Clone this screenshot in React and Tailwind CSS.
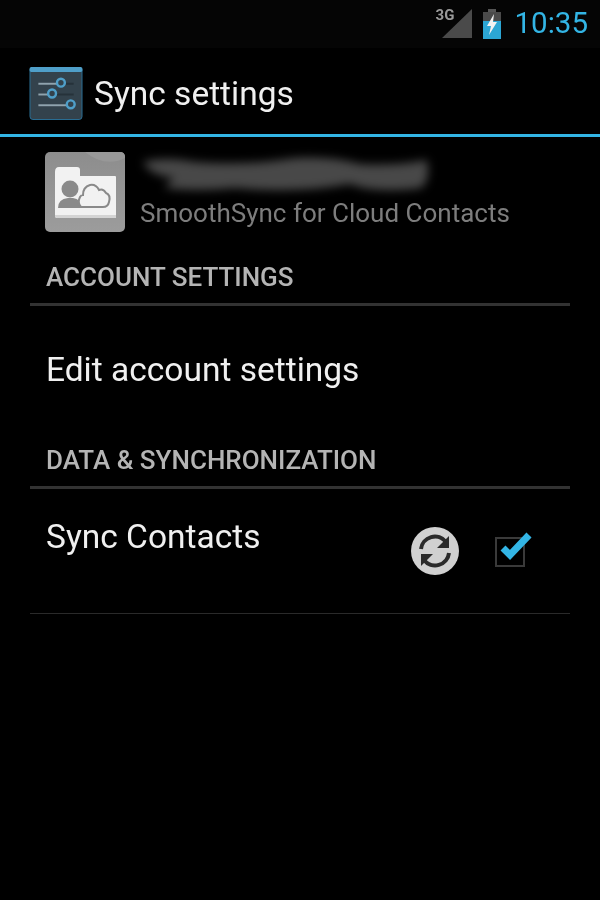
import React from "react";

const SettingsIcon = () => (
  <svg width="54" height="53" viewBox="0 0 54 54" className="mt-1 shrink-0">
    <rect x="0.5" y="0.5" width="53" height="53" rx="3" fill="#33424c" stroke="#2a6f96" />
    <rect x="0" y="0" width="54" height="5" rx="2" fill="#4f9fc9" />
    <path d="M9 17H45M9 28H45M9 39H45" stroke="#26323a" strokeWidth="2" />
    <path d="M9 17H32M9 28H23M9 39H42" stroke="#8fa3ae" strokeWidth="2" />
    <circle cx="32" cy="16" r="4" fill="#33424c" stroke="#4f9fc9" strokeWidth="2.5" />
    <circle cx="23" cy="27" r="4" fill="#33424c" stroke="#4f9fc9" strokeWidth="2.5" />
    <circle cx="42" cy="38" r="4" fill="#33424c" stroke="#4f9fc9" strokeWidth="2.5" />
  </svg>
);

const AccountIcon = () => (
  <svg width="80" height="80" viewBox="0 0 80 80" className="shrink-0">
    <defs>
      <linearGradient id="tile" x1="0" y1="0" x2="0" y2="1">
        <stop offset="0" stopColor="#8d8d8d" />
        <stop offset="1" stopColor="#9c9c9c" />
      </linearGradient>
    </defs>
    <rect width="80" height="80" rx="5" fill="url(#tile)" />
    <path d="M40 0H75Q80 0 80 5V6Q60 16 40 0Z" fill="#989898" />
    <path d="M10 20Q10 15 14 15H32Q35 15 35 18V24H70Q71 24 71 25V65Q71 66 70 66H12Q10 66 10 64Z" fill="#f2f2f2" />
    <path d="M10 63H71V65Q71 66 70 66H12Q10 66 10 64Z" fill="#d4d4d4" />
    <circle cx="25" cy="37" r="8.5" fill="#8a8a8a" />
    <path d="M13 56Q13 47 23 46H28Q36 47 37 56Z" fill="#8a8a8a" />
    <path
      d="M36 55Q32 51 35 45Q36 43 38 43Q38 35 45 33Q51 32 54 38Q58 36 61 41Q66 43 64 50Q63 55 58 55Z"
      fill="#f2f2f2"
      stroke="#8a8a8a"
      strokeWidth="2"
    />
  </svg>
);

const SectionHeader = ({ children }) => (
  <div className="mx-[30px] border-b-[3px] border-[#323232] pb-[11px] pl-4">
    <p className="text-[26px] font-medium leading-[30px] text-[#b4b4b4]">{children}</p>
  </div>
);

export default function App() {
  return (
    <div className="flex h-[900px] w-[600px] flex-col overflow-hidden bg-black font-['Roboto',sans-serif] blur-[0.6px]">
      {/* status bar */}
      <div className="flex h-12 items-center justify-end bg-[#050505] pr-3">
        <div className="relative mr-[10px] h-[30px] w-[36px]">
          <svg width="30" height="29" viewBox="0 0 30 29" className="absolute right-0 top-0">
            <path d="M30 0V29H0Z" fill="#4a4a4a" />
          </svg>
          <span className="absolute -top-[2px] left-0 text-[15px] font-bold leading-4 text-[#9a9a9a]">3G</span>
        </div>
        <svg width="20" height="30" viewBox="0 0 20 30" className="mr-[13px]">
          <rect x="6" y="0" width="8" height="3" fill="#555" />
          <rect x="1" y="3" width="18" height="27" fill="#4a4a4a" />
          <rect x="1" y="12" width="18" height="18" fill="#2ca6d4" />
          <path d="M12 5L5 17H9L7 26L15 13H11Z" fill="#f2f2f2" />
        </svg>
        <span className="text-[29.5px] leading-none text-[#33b5e5]">10:35</span>
      </div>

      {/* action bar */}
      <div className="flex h-[86px] items-center gap-[11px] pl-[29px]">
        <SettingsIcon />
        <h1 className="mt-[6px] text-[33.5px] font-normal leading-none text-[#f0f0f0]">Sync settings</h1>
      </div>
      <div className="h-[3px] bg-[#33b5e5]" />

      {/* account */}
      <div className="flex h-[121px] items-start gap-[15px] pl-[45px] pt-[15px]">
        <AccountIcon />
        <div className="relative flex h-20 flex-1 flex-col justify-end">
          <svg width="320" height="60" viewBox="0 0 320 60" className="absolute -left-[15px] -top-[8px]">
            <path
              d="M18 18Q40 12 70 18Q120 22 170 14Q205 12 235 20Q270 22 302 16Q306 36 296 44Q250 50 225 40Q170 50 110 44Q70 48 40 44Q45 36 50 34Q25 32 18 18Z"
              fill="#484848"
              className="blur-[5px]"
            />
          </svg>
          <p className="pb-[3px] text-[26px] leading-8 text-[#7d7d7d]">SmoothSync for Cloud Contacts</p>
        </div>
      </div>

      <div className="pt-1">
        <SectionHeader>ACCOUNT SETTINGS</SectionHeader>
      </div>
      <div className="flex h-[139px] items-center pb-[11px] pl-[46px]">
        <p className="text-[33.5px] leading-none text-[#f0f0f0]">Edit account settings</p>
      </div>
      <SectionHeader>DATA &amp; SYNCHRONIZATION</SectionHeader>

      {/* sync row */}
      <div className="mx-[30px] flex h-[125px] items-start border-b border-[#2a2a2a] pl-4">
        <p className="flex-1 pt-[31px] text-[33.5px] leading-none text-[#f0f0f0]">Sync Contacts</p>
        <svg width="48" height="48" viewBox="0 0 48 48" className="mt-[38px]">
          <circle cx="24" cy="24" r="24" fill="#d0d0d0" />
          <path d="M10 22A14 14 0 0 1 35 15" fill="none" stroke="#2a2a2a" strokeWidth="4" />
          <path d="M38 9V21H26Z" fill="#2a2a2a" />
          <path d="M38 26A14 14 0 0 1 13 33" fill="none" stroke="#2a2a2a" strokeWidth="4" />
          <path d="M10 39V27H22Z" fill="#2a2a2a" />
        </svg>
        <div className="relative ml-[36px] mr-[45px] mt-[48px] h-[30px] w-[30px] border-2 border-[#3a3a3a]">
          <svg width="38" height="34" viewBox="0 0 38 34" className="absolute left-[1px] -top-[9px]">
            <path d="M5 18L12 25L31 5" fill="none" stroke="#33b5e5" strokeWidth="7" />
          </svg>
        </div>
      </div>
    </div>
  );
}
